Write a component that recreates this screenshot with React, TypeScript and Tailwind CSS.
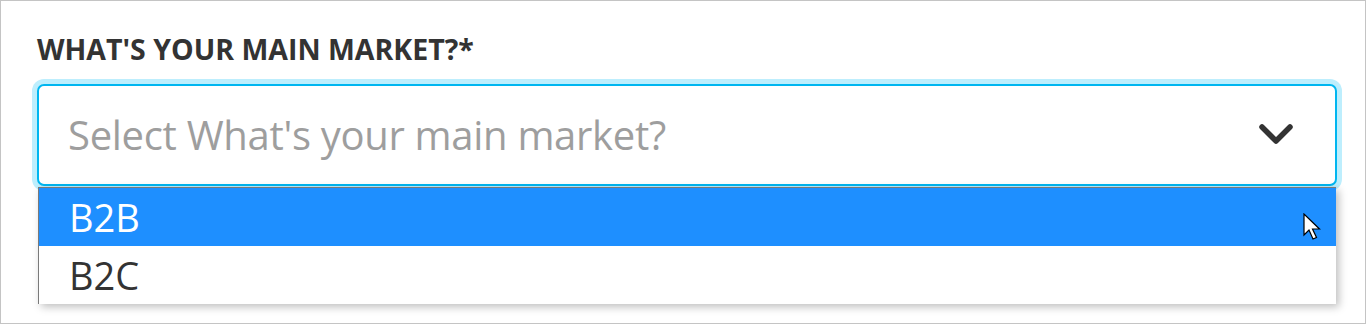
import React from "react";

const font = { fontFamily: '"Open Sans", "Noto Sans", sans-serif' };

function Chevron() {
  return (
    <svg width="38" height="28" viewBox="0 0 38 28" fill="none" aria-hidden="true">
      <polyline
        points="5,6 19,20 33,6"
        stroke="#333333"
        strokeWidth="5.5"
        strokeLinecap="round"
        strokeLinejoin="round"
      />
    </svg>
  );
}

function Cursor() {
  return (
    <svg width="20" height="30" viewBox="0 0 20 30" aria-hidden="true">
      <path
        d="M1 1 L1 22 L6 17 L10 26 L13.5 24.5 L9.5 16 L16.5 16 Z"
        fill="#ffffff"
        stroke="#000000"
        strokeWidth="1.2"
        strokeLinejoin="miter"
      />
    </svg>
  );
}

export default function App() {
  return (
    <div className="w-[1366px] h-[324px] border border-[#c4c4c4] bg-white overflow-hidden" style={font}>
      <div className="pl-[36px] pt-[30px]">
        <label className="block text-[28.5px] leading-[36px] font-bold uppercase text-[#333333]">
          What's your main market?*
        </label>
        <div className="relative mt-[17px] w-[1300px]">
          <div className="h-[102px] rounded-[7px] border-2 border-[#00b6f0] ring-[5px] ring-[#bdeefd] bg-white flex items-center justify-between pl-[29px] pr-[40px]">
            <span className="text-[40px] leading-[50px] text-[#9e9e9e] tracking-[-0.3px]">Select What's your main market?</span>
            <Chevron />
          </div>
          <ul className="absolute left-[1px] top-[103px] w-[1298px] h-[117px] overflow-hidden bg-white border-l border-t border-[#7a7a7a] shadow-[3px_3px_8px_rgba(0,0,0,0.25)]">
            <li className="relative h-[58px] bg-[#1e8fff] text-white text-[38px] leading-[58px] pl-[30px]">
              B2B
              <span className="absolute right-[13px] top-[25px] leading-none">
                <Cursor />
              </span>
            </li>
            <li className="h-[58px] text-[#333333] text-[38px] leading-[58px] pl-[30px]">B2C</li>
          </ul>
        </div>
      </div>
    </div>
  );
}
